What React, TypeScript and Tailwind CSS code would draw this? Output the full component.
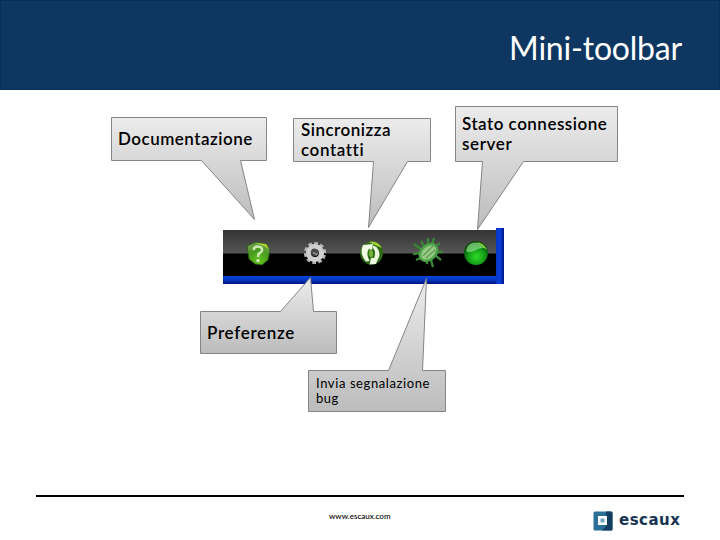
import { clsx } from 'clsx';

type CalloutProps = {
  id: string;
  box: string;
  size: [number, number];
  points: string;
  textClass: string;
  lines: { text: string; className: string }[];
};

const callouts: CalloutProps[] = [
  {
    id: 'docs',
    box: 'left-[111px] top-[27px]',
    size: [157, 104],
    points: '0.5,0.5 155.5,0.5 155.5,43.5 129.5,43.5 143.5,102.5 90.5,43.5 0.5,43.5',
    textClass: 'left-[7px] top-[12px] text-[17px] leading-5 font-semibold',
    lines: [{ text: 'Documentazione', className: 'tracking-[0.5px]' }],
  },
  {
    id: 'sync',
    box: 'left-[293px] top-[28px]',
    size: [139, 111],
    points: '0.5,0.5 137.5,0.5 137.5,43.5 114.5,43.5 75.5,109.5 80.5,43.5 0.5,43.5',
    textClass: 'left-[8px] top-[2px] text-[17px] leading-5 font-semibold',
    lines: [
      { text: 'Sincronizza', className: 'tracking-[0.5px]' },
      { text: 'contatti', className: 'tracking-[0.6px]' },
    ],
  },
  {
    id: 'status',
    box: 'left-[455px] top-[16px]',
    size: [164, 125],
    points: '0.5,0.5 162.5,0.5 162.5,55.5 68.5,55.5 22.5,123.5 27.5,55.5 0.5,55.5',
    textClass: 'left-[7px] top-[8px] text-[17px] leading-5 font-semibold',
    lines: [
      { text: 'Stato connessione', className: 'tracking-[0.5px]' },
      { text: 'server', className: 'tracking-[0.6px]' },
    ],
  },
  {
    id: 'prefs',
    box: 'left-[200px] top-[187px]',
    size: [138, 78],
    points: '0.5,34.5 80.5,34.5 110.5,0.5 113.5,34.5 136.5,34.5 136.5,76.5 0.5,76.5',
    textClass: 'left-[7px] top-[46px] text-[17px] leading-5 font-semibold',
    lines: [{ text: 'Preferenze', className: 'tracking-[0.7px]' }],
  },
  {
    id: 'bug',
    box: 'left-[308px] top-[188px]',
    size: [139, 135],
    points: '0.5,92.5 80.5,92.5 118.5,0.5 114.5,92.5 137.5,92.5 137.5,133.5 0.5,133.5',
    textClass: 'left-[8px] top-[98px] text-[13px] leading-[15px]',
    lines: [
      { text: 'Invia segnalazione', className: 'tracking-[0.6px]' },
      { text: 'bug', className: 'tracking-[0.5px]' },
    ],
  },
];

function Callout({ id, box, size, points, textClass, lines }: CalloutProps) {
  return (
    <div className={clsx('absolute', box)}>
      <svg width={size[0]} height={size[1]} className="block">
        <defs>
          <linearGradient id={id} x1="0" y1="0" x2="0" y2="1">
            <stop offset="0" stopColor="#ececec" />
            <stop offset="1" stopColor="#bcbcbc" />
          </linearGradient>
        </defs>
        <polygon points={points} fill={`url(#${id})`} stroke="#858585" />
      </svg>
      <div className={clsx('absolute whitespace-nowrap text-black', textClass)}>
        {lines.map((line) => (
          <div key={line.text} className={line.className}>
            {line.text}
          </div>
        ))}
      </div>
    </div>
  );
}

function HelpIcon() {
  return (
    <svg width="28" height="28" viewBox="0 0 28 28">
      <defs>
        <radialGradient id="help" cx="0.5" cy="0.85" r="0.8">
          <stop offset="0" stopColor="#62c51c" />
          <stop offset="0.6" stopColor="#499b20" />
          <stop offset="1" stopColor="#6f9f45" />
        </radialGradient>
      </defs>
      <path d="M3 7 L12 3 L23 5 L26 11 L24 21 L18 26 L11 25 L5 20 Z" fill="url(#help)" stroke="#28550f" strokeWidth="0.8" />
      <path d="M12 4 L22 5 L25 10 L20 7 Z" fill="#b7cf35" />
      <path d="M9.5 11 Q10 7.5 14 7.5 Q18.5 7.7 18 11.5 Q17.6 13.5 14.5 15 L14 18" fill="none" stroke="#c8e8ae" strokeWidth="2.6" />
      <circle cx="14" cy="21.5" r="1.6" fill="#dcf2c8" />
    </svg>
  );
}

function GearIcon() {
  return (
    <svg width="28" height="28" viewBox="0 0 28 28">
      <g transform="rotate(12 14 14)">
        <circle cx="14" cy="14" r="9.6" fill="none" stroke="#b5b5b5" strokeWidth="3" strokeDasharray="3.6 2.43" />
        <circle cx="14" cy="14" r="6.5" fill="none" stroke="#cfcfcf" strokeWidth="5" />
        <circle cx="13.5" cy="13.5" r="3.8" fill="#484848" />
        <path d="M12 14 L17 15" stroke="#888888" strokeWidth="1.8" />
      </g>
    </svg>
  );
}

function SyncIcon() {
  return (
    <svg width="28" height="28" viewBox="0 0 28 28">
      <circle cx="14.5" cy="14" r="11.5" fill="#2c6a16" />
      <path d="M12 3 Q20 1 25 9 L20 7 Z" fill="#9ed02f" />
      <path d="M16 5 L6 6 Q2 14 9 22.5 L12.5 22 Q8.5 14 12 10 L15 11 Z" fill="#f0fae4" />
      <path d="M16 6.5 L19.5 8 Q25 15 20.5 21 L19 25 L12.5 25.5 L14 19 L17 19 Q19.5 13 16 9 Z" fill="#eaf8dd" />
      <path d="M13 10 Q17.5 12 15.5 18.5 Q10 18 13 10 Z" fill="#72b33b" />
    </svg>
  );
}

function BugIcon() {
  return (
    <svg width="34" height="34" viewBox="0 0 34 34">
      <g fill="none" stroke="#3c8438" strokeWidth="2.4">
        <path d="M10 13 L3 8 M9 17 L2 18 M10 22 L5 24 M13 10 L10 5 M17 9 L17 2 M21 9 L23 2 M24 11 L29 7 M27 16 L32 16 M25 20 L30 24 M20 24 L22 31 M16 25 L16 28" />
      </g>
      <ellipse cx="17.5" cy="16.5" rx="11" ry="8.4" transform="rotate(-42 17.5 16.5)" fill="#4ea24a" />
      <ellipse cx="17.5" cy="16.5" rx="8.5" ry="5.6" transform="rotate(-42 17.5 16.5)" fill="#98ca86" />
      <path d="M12 20 L22 10 M15 22 L24 14" stroke="#5c9a4c" strokeWidth="1.2" />
    </svg>
  );
}

function StatusIcon() {
  return (
    <svg width="28" height="28" viewBox="0 0 28 28">
      <defs>
        <radialGradient id="ball" cx="0.52" cy="0.65" r="0.6">
          <stop offset="0" stopColor="#2fdc25" />
          <stop offset="0.6" stopColor="#139b17" />
          <stop offset="1" stopColor="#084708" />
        </radialGradient>
      </defs>
      <circle cx="14" cy="14" r="12" fill="url(#ball)" />
      <path d="M4 12 Q5 4 13 3.5 Q21 4 22 9 Q16 9 12 12 Q7 14 4 12 Z" fill="#8fdd8c" opacity="0.7" />
      <path d="M15 3 Q22 4 25 11 L21 8 Z" fill="#83cf39" />
    </svg>
  );
}

function Toolbar() {
  return (
    <div className="absolute left-[223px] top-[138px] flex h-14 w-[281px]">
      <div className="mt-0.5 flex w-[273px] flex-col">
        <div className="flex h-[46px] items-center bg-[linear-gradient(to_bottom,#343434_0px,#555555_23px,#000000_24px)]">
          <div className="ml-[21px]"><HelpIcon /></div>
          <div className="ml-[29px]"><GearIcon /></div>
          <div className="ml-[28px]"><SyncIcon /></div>
          <div className="ml-[26px]"><BugIcon /></div>
          <div className="ml-[17px]"><StatusIcon /></div>
        </div>
        <div className="h-2 bg-linear-to-b from-[#0846dd] via-[#0535c0] to-[#00107c]" />
      </div>
      <div className="w-2 bg-linear-to-r from-[#0535c0] via-[#0a40da] to-[#001388]" />
    </div>
  );
}

function Logo() {
  return (
    <div className="flex items-center">
      <svg width="20" height="20" viewBox="0 0 20 20">
        <rect width="19" height="19" x="0.5" y="0.5" rx="1.5" fill="#2a7099" />
        <path d="M13 0.5 H18 Q19.5 0.5 19.5 2 V18 Q19.5 19.5 18 19.5 H9 L13 15 Z" fill="#123e60" />
        <rect x="5" y="5" width="9" height="9" fill="#ffffff" />
        <rect x="7.5" y="7.5" width="4" height="4" fill="#6fa3c2" />
      </svg>
      <span className="ml-1.5 -mt-[3px] font-['DejaVu_Sans',sans-serif] text-[15px] leading-5 font-bold tracking-[0.5px] text-[#173354]">escaux</span>
    </div>
  );
}

export default function App() {
  return (
    <div className="flex h-[540px] w-[720px] flex-col overflow-hidden bg-white font-[Lato,sans-serif]">
      <header className="flex h-[90px] items-center justify-end border border-[#052f55] bg-[#0d3760] pr-[37px]">
        <h1 className="mt-1.5 text-[32px] leading-10 tracking-[-0.2px] text-white">Mini-toolbar</h1>
      </header>

      <main className="relative h-[405px]">
        <Toolbar />
        {callouts.map((callout) => (
          <Callout key={callout.id} {...callout} />
        ))}
      </main>

      <footer className="mx-9 flex h-[45px] items-start border-t-2 border-black">
        <span className="ml-[293px] mt-[11px] w-[64px] text-[8px] leading-4 font-medium whitespace-nowrap text-black">www.escaux.com</span>
        <div className="ml-[200px] mt-3.5"><Logo /></div>
      </footer>
    </div>
  );
}
